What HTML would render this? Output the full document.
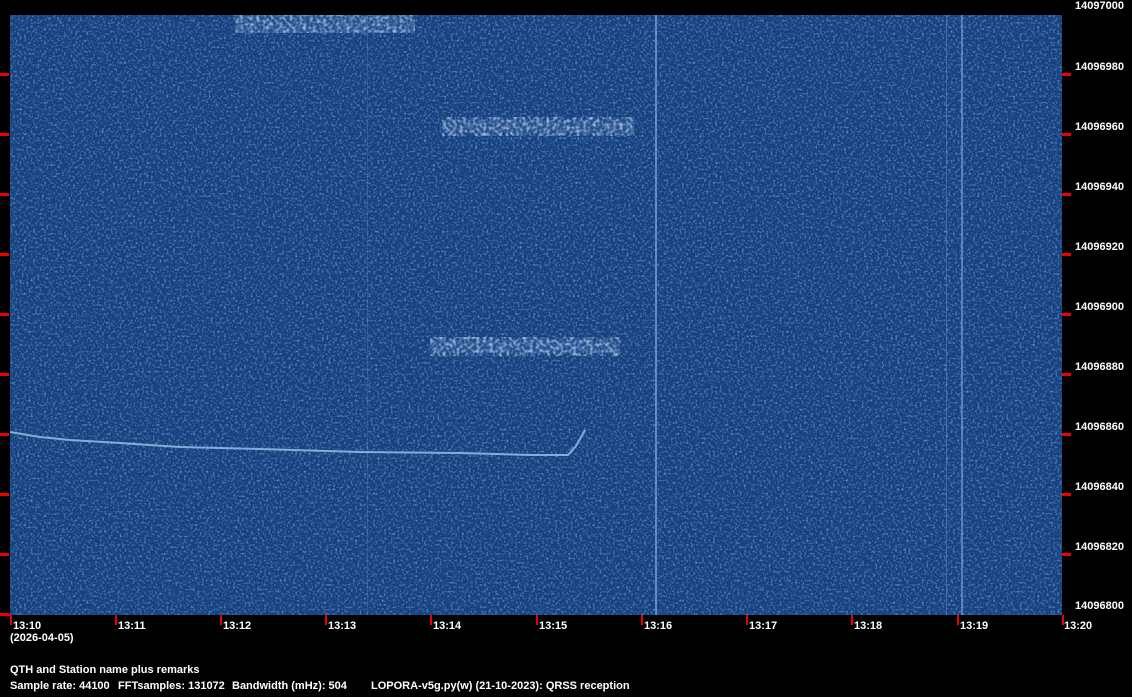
<!DOCTYPE html>
<html><head><meta charset="utf-8"><style>
body{margin:0;background:#000;width:1132px;height:697px;overflow:hidden;position:relative;font-family:"Liberation Sans",sans-serif;font-weight:bold;font-size:11px;color:#fff}
.t{position:absolute;white-space:nowrap;line-height:12px}
svg{position:absolute;left:0;top:0}
</style></head><body>
<svg width="1132" height="697">
<defs>
<filter id="n" x="0" y="0" width="100%" height="100%">
<feTurbulence type="fractalNoise" baseFrequency="0.45" numOctaves="2" seed="3"/>
<feColorMatrix type="matrix" values="0 0 0 0 0.35  0 0 0 0 0.55  0 0 0 0 0.95  0 0 0 1.6 -0.78"/>
</filter>
<filter id="z" x="0" y="0" width="100%" height="100%">
<feTurbulence type="fractalNoise" baseFrequency="0.3" numOctaves="1" seed="9"/>
<feColorMatrix type="matrix" values="0 0 0 0 0.7  0 0 0 0 0.85  0 0 0 0 1  0 0 0 3 -1.3"/>
</filter>
</defs>
<rect x="10" y="15" width="1052" height="600" fill="#15417f"/>
<rect x="10" y="15" width="1052" height="600" filter="url(#n)"/>
<g opacity="0.7">
<rect x="235" y="15" width="180" height="18" filter="url(#z)"/>
<rect x="442" y="117" width="192" height="19" filter="url(#z)"/>
<rect x="430" y="337" width="190" height="19" filter="url(#z)"/>
</g>
<rect x="235" y="15" width="180" height="18" fill="#6f98d0" opacity="0.15"/>
<rect x="442" y="120" width="192" height="13" fill="#6f98d0" opacity="0.15"/>
<rect x="430" y="340" width="190" height="13" fill="#6f98d0" opacity="0.15"/>
<rect x="655" y="15" width="2" height="600" fill="#7ea7da" opacity="0.7"/>
<rect x="946" y="15" width="1" height="600" fill="#6f98cc" opacity="0.45"/>
<rect x="961" y="15" width="2" height="600" fill="#7ea7da" opacity="0.6"/>
<rect x="367" y="15" width="1" height="600" fill="#5f88c0" opacity="0.35"/>
<polyline fill="none" stroke="#86acdc" stroke-width="2" points="10,432 40,437 70,440 120,443 180,447 260,449 360,452 460,453 530,455 568,455 576,446 585,430"/>
<g fill="#e00">
<rect x="0" y="73" width="9" height="3"/><rect x="0" y="133" width="9" height="3"/><rect x="0" y="193" width="9" height="3"/><rect x="0" y="253" width="9" height="3"/><rect x="0" y="313" width="9" height="3"/><rect x="0" y="373" width="9" height="3"/><rect x="0" y="433" width="9" height="3"/><rect x="0" y="493" width="9" height="3"/><rect x="0" y="553" width="9" height="3"/><rect x="0" y="613" width="10" height="3"/>
<rect x="1062" y="73" width="9" height="3"/><rect x="1062" y="133" width="9" height="3"/><rect x="1062" y="193" width="9" height="3"/><rect x="1062" y="253" width="9" height="3"/><rect x="1062" y="313" width="9" height="3"/><rect x="1062" y="373" width="9" height="3"/><rect x="1062" y="433" width="9" height="3"/><rect x="1062" y="493" width="9" height="3"/><rect x="1062" y="553" width="9" height="3"/>
<rect x="10" y="615" width="2" height="10"/><rect x="115" y="615" width="2" height="10"/><rect x="220" y="615" width="2" height="10"/><rect x="325" y="615" width="2" height="10"/><rect x="430" y="615" width="2" height="10"/><rect x="536" y="615" width="2" height="10"/><rect x="641" y="615" width="2" height="10"/><rect x="746" y="615" width="2" height="10"/><rect x="851" y="615" width="2" height="10"/><rect x="957" y="615" width="2" height="10"/><rect x="1062" y="615" width="2" height="10"/>
</g>
</svg>
<div class="t" style="left:1075px;top:0px">14097000</div>
<div class="t" style="left:1075px;top:61px">14096980</div>
<div class="t" style="left:1075px;top:121px">14096960</div>
<div class="t" style="left:1075px;top:181px">14096940</div>
<div class="t" style="left:1075px;top:241px">14096920</div>
<div class="t" style="left:1075px;top:301px">14096900</div>
<div class="t" style="left:1075px;top:361px">14096880</div>
<div class="t" style="left:1075px;top:421px">14096860</div>
<div class="t" style="left:1075px;top:481px">14096840</div>
<div class="t" style="left:1075px;top:541px">14096820</div>
<div class="t" style="left:1075px;top:600px">14096800</div>
<div class="t" style="left:13px;top:620px">13:10</div>
<div class="t" style="left:118px;top:620px">13:11</div>
<div class="t" style="left:223px;top:620px">13:12</div>
<div class="t" style="left:328px;top:620px">13:13</div>
<div class="t" style="left:433px;top:620px">13:14</div>
<div class="t" style="left:539px;top:620px">13:15</div>
<div class="t" style="left:644px;top:620px">13:16</div>
<div class="t" style="left:749px;top:620px">13:17</div>
<div class="t" style="left:854px;top:620px">13:18</div>
<div class="t" style="left:960px;top:620px">13:19</div>
<div class="t" style="left:1064px;top:620px">13:20</div>
<div class="t" style="left:10px;top:632px">(2026-04-05)</div>
<div class="t" style="left:10px;top:664px">QTH and Station name plus remarks</div>
<div class="t" style="left:10px;top:680px">Sample rate: 44100</div>
<div class="t" style="left:118px;top:680px">FFTsamples: 131072</div>
<div class="t" style="left:232px;top:680px">Bandwidth (mHz): 504</div>
<div class="t" style="left:371px;top:680px">LOPORA-v5g.py(w) (21-10-2023): QRSS reception</div>
</body></html>
